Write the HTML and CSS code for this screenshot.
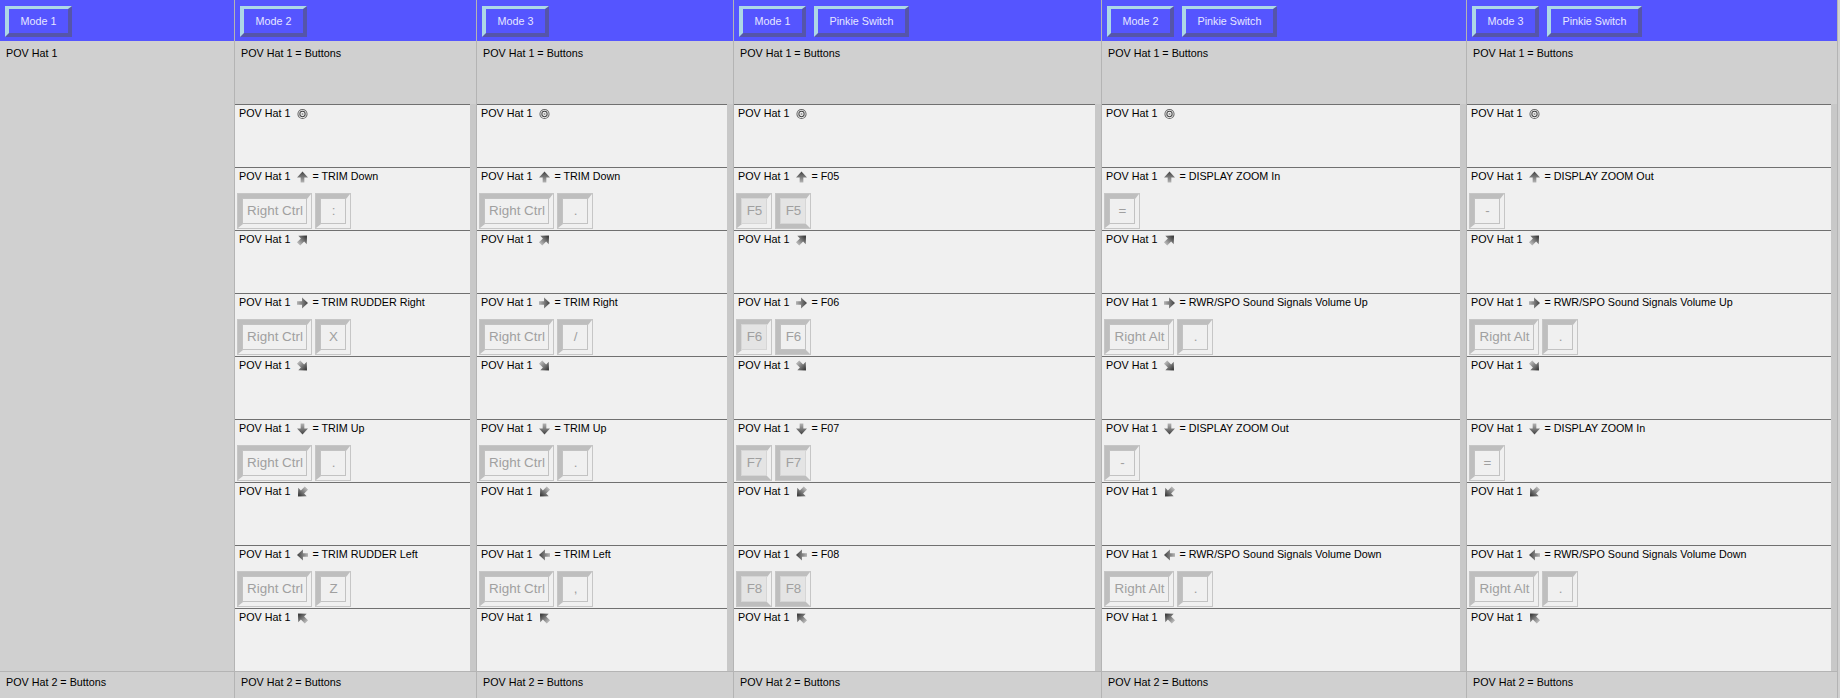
FILE: index.html
```html
<!DOCTYPE html>
<html lang="en">
<head>
<meta charset="utf-8">
<title>POV Hat bindings</title>
<link rel="stylesheet" href="styles.css">
</head>
<body>
<svg class="defs" aria-hidden="true">
  <defs>
    <linearGradient id="ag" x1="0" y1="0" x2="0" y2="1">
      <stop offset="0" stop-color="#404040"/>
      <stop offset="1" stop-color="#b4b4b4"/>
    </linearGradient>
    <linearGradient id="dg" gradientUnits="userSpaceOnUse" x1="6" y1="1" x2="6" y2="11">
      <stop offset="0" stop-color="#404040"/>
      <stop offset="1" stop-color="#b0b0b0"/>
    </linearGradient>
    <symbol id="c" viewBox="0 0 12 12"><circle cx="6" cy="6" r="5" fill="none" stroke="#666" stroke-width="1.1"/><circle cx="6" cy="6" r="2.9" fill="none" stroke="#444" stroke-width="1.1"/><circle cx="6" cy="6" r="1.1" fill="#999"/></symbol>
    <symbol id="n" viewBox="0 0 12 12"><path d="M6 0L12 6.5H8V12H4V6.5H0Z" fill="url(#ag)"/></symbol>
    <symbol id="s" viewBox="0 0 12 12"><g transform="rotate(180 6 6)"><path d="M6 0L12 6.5H8V12H4V6.5H0Z" fill="url(#ag)"/></g></symbol>
    <symbol id="e" viewBox="0 0 12 12"><g transform="rotate(90 6 6)"><path d="M6 0L12 6.5H8V12H4V6.5H0Z" fill="url(#ag)"/></g></symbol>
    <symbol id="w" viewBox="0 0 12 12"><g transform="rotate(270 6 6)"><path d="M6 0L12 6.5H8V12H4V6.5H0Z" fill="url(#ag)"/></g></symbol>
    <symbol id="ne" viewBox="0 0 12 12"><g transform="rotate(45 6 6)"><path d="M6 -1L12.5 6H8.5V12H3.5V6H-.5Z" fill="url(#dg)"/></g></symbol>
    <symbol id="se" viewBox="0 0 12 12"><g transform="rotate(135 6 6)"><path d="M6 -1L12.5 6H8.5V12H3.5V6H-.5Z" fill="url(#dg)"/></g></symbol>
    <symbol id="sw" viewBox="0 0 12 12"><g transform="rotate(225 6 6)"><path d="M6 -1L12.5 6H8.5V12H3.5V6H-.5Z" fill="url(#dg)"/></g></symbol>
    <symbol id="nw" viewBox="0 0 12 12"><g transform="rotate(315 6 6)"><path d="M6 -1L12.5 6H8.5V12H3.5V6H-.5Z" fill="url(#dg)"/></g></symbol>
  </defs>
</svg>

<main class="board">
  <section class="col col-1">
    <header class="head"><button class="mode m-mode">Mode 1</button></header>
    <div class="first-body"><p class="summary">POV Hat 1</p></div>
    <div class="foot"><p class="summary">POV Hat 2 = Buttons</p></div>
  </section>

  <section class="col col-2">
    <header class="head"><button class="mode m-mode">Mode 2</button></header>
    <div class="top"><p class="summary">POV Hat 1 = Buttons</p></div>
    <div class="rows">
      <div class="row"><div class="lab">POV Hat 1<svg class="ic"><use href="#c"/></svg></div></div>
      <div class="row"><div class="lab">POV Hat 1<svg class="ic"><use href="#n"/></svg><span>= TRIM Down</span></div>
        <div class="keys"><span class="key k-wide"><span class="face">Right Ctrl</span></span><span class="key"><span class="face">:</span></span></div></div>
      <div class="row"><div class="lab">POV Hat 1<svg class="ic"><use href="#ne"/></svg></div></div>
      <div class="row"><div class="lab">POV Hat 1<svg class="ic"><use href="#e"/></svg><span>= TRIM RUDDER Right</span></div>
        <div class="keys"><span class="key k-wide"><span class="face">Right Ctrl</span></span><span class="key"><span class="face">X</span></span></div></div>
      <div class="row"><div class="lab">POV Hat 1<svg class="ic"><use href="#se"/></svg></div></div>
      <div class="row"><div class="lab">POV Hat 1<svg class="ic"><use href="#s"/></svg><span>= TRIM Up</span></div>
        <div class="keys"><span class="key k-wide"><span class="face">Right Ctrl</span></span><span class="key"><span class="face">.</span></span></div></div>
      <div class="row"><div class="lab">POV Hat 1<svg class="ic"><use href="#sw"/></svg></div></div>
      <div class="row"><div class="lab">POV Hat 1<svg class="ic"><use href="#w"/></svg><span>= TRIM RUDDER Left</span></div>
        <div class="keys"><span class="key k-wide"><span class="face">Right Ctrl</span></span><span class="key"><span class="face">Z</span></span></div></div>
      <div class="row"><div class="lab">POV Hat 1<svg class="ic"><use href="#nw"/></svg></div></div>
    </div>
    <div class="foot"><p class="summary">POV Hat 2 = Buttons</p></div>
  </section>

  <section class="col col-3">
    <header class="head"><button class="mode m-mode">Mode 3</button></header>
    <div class="top"><p class="summary">POV Hat 1 = Buttons</p></div>
    <div class="rows">
      <div class="row"><div class="lab">POV Hat 1<svg class="ic"><use href="#c"/></svg></div></div>
      <div class="row"><div class="lab">POV Hat 1<svg class="ic"><use href="#n"/></svg><span>= TRIM Down</span></div>
        <div class="keys"><span class="key k-wide"><span class="face">Right Ctrl</span></span><span class="key"><span class="face">.</span></span></div></div>
      <div class="row"><div class="lab">POV Hat 1<svg class="ic"><use href="#ne"/></svg></div></div>
      <div class="row"><div class="lab">POV Hat 1<svg class="ic"><use href="#e"/></svg><span>= TRIM Right</span></div>
        <div class="keys"><span class="key k-wide"><span class="face">Right Ctrl</span></span><span class="key"><span class="face">/</span></span></div></div>
      <div class="row"><div class="lab">POV Hat 1<svg class="ic"><use href="#se"/></svg></div></div>
      <div class="row"><div class="lab">POV Hat 1<svg class="ic"><use href="#s"/></svg><span>= TRIM Up</span></div>
        <div class="keys"><span class="key k-wide"><span class="face">Right Ctrl</span></span><span class="key"><span class="face">.</span></span></div></div>
      <div class="row"><div class="lab">POV Hat 1<svg class="ic"><use href="#sw"/></svg></div></div>
      <div class="row"><div class="lab">POV Hat 1<svg class="ic"><use href="#w"/></svg><span>= TRIM Left</span></div>
        <div class="keys"><span class="key k-wide"><span class="face">Right Ctrl</span></span><span class="key"><span class="face">,</span></span></div></div>
      <div class="row"><div class="lab">POV Hat 1<svg class="ic"><use href="#nw"/></svg></div></div>
    </div>
    <div class="foot"><p class="summary">POV Hat 2 = Buttons</p></div>
  </section>

  <section class="col col-4">
    <header class="head"><button class="mode m-mode">Mode 1</button><button class="mode m-pinkie">Pinkie Switch</button></header>
    <div class="top"><p class="summary">POV Hat 1 = Buttons</p></div>
    <div class="rows">
      <div class="row"><div class="lab">POV Hat 1<svg class="ic"><use href="#c"/></svg></div></div>
      <div class="row"><div class="lab">POV Hat 1<svg class="ic"><use href="#n"/></svg><span>= F05</span></div>
        <div class="keys"><span class="key"><span class="face f-dim">F5</span></span><span class="key"><span class="face f-dim f-low">F5</span></span></div></div>
      <div class="row"><div class="lab">POV Hat 1<svg class="ic"><use href="#ne"/></svg></div></div>
      <div class="row"><div class="lab">POV Hat 1<svg class="ic"><use href="#e"/></svg><span>= F06</span></div>
        <div class="keys"><span class="key"><span class="face f-dim">F6</span></span><span class="key"><span class="face f-low">F6</span></span></div></div>
      <div class="row"><div class="lab">POV Hat 1<svg class="ic"><use href="#se"/></svg></div></div>
      <div class="row"><div class="lab">POV Hat 1<svg class="ic"><use href="#s"/></svg><span>= F07</span></div>
        <div class="keys"><span class="key"><span class="face f-dim f-low">F7</span></span><span class="key"><span class="face f-dim f-low">F7</span></span></div></div>
      <div class="row"><div class="lab">POV Hat 1<svg class="ic"><use href="#sw"/></svg></div></div>
      <div class="row"><div class="lab">POV Hat 1<svg class="ic"><use href="#w"/></svg><span>= F08</span></div>
        <div class="keys"><span class="key"><span class="face f-dim f-low">F8</span></span><span class="key"><span class="face f-dim f-low">F8</span></span></div></div>
      <div class="row"><div class="lab">POV Hat 1<svg class="ic"><use href="#nw"/></svg></div></div>
    </div>
    <div class="foot"><p class="summary">POV Hat 2 = Buttons</p></div>
  </section>

  <section class="col col-5">
    <header class="head"><button class="mode m-mode">Mode 2</button><button class="mode m-pinkie">Pinkie Switch</button></header>
    <div class="top"><p class="summary">POV Hat 1 = Buttons</p></div>
    <div class="rows">
      <div class="row"><div class="lab">POV Hat 1<svg class="ic"><use href="#c"/></svg></div></div>
      <div class="row"><div class="lab">POV Hat 1<svg class="ic"><use href="#n"/></svg><span>= DISPLAY ZOOM In</span></div>
        <div class="keys"><span class="key"><span class="face">=</span></span></div></div>
      <div class="row"><div class="lab">POV Hat 1<svg class="ic"><use href="#ne"/></svg></div></div>
      <div class="row"><div class="lab">POV Hat 1<svg class="ic"><use href="#e"/></svg><span>= RWR/SPO Sound Signals Volume Up</span></div>
        <div class="keys"><span class="key k-alt"><span class="face">Right Alt</span></span><span class="key"><span class="face">.</span></span></div></div>
      <div class="row"><div class="lab">POV Hat 1<svg class="ic"><use href="#se"/></svg></div></div>
      <div class="row"><div class="lab">POV Hat 1<svg class="ic"><use href="#s"/></svg><span>= DISPLAY ZOOM Out</span></div>
        <div class="keys"><span class="key"><span class="face">-</span></span></div></div>
      <div class="row"><div class="lab">POV Hat 1<svg class="ic"><use href="#sw"/></svg></div></div>
      <div class="row"><div class="lab">POV Hat 1<svg class="ic"><use href="#w"/></svg><span>= RWR/SPO Sound Signals Volume Down</span></div>
        <div class="keys"><span class="key k-alt"><span class="face">Right Alt</span></span><span class="key"><span class="face">.</span></span></div></div>
      <div class="row"><div class="lab">POV Hat 1<svg class="ic"><use href="#nw"/></svg></div></div>
    </div>
    <div class="foot"><p class="summary">POV Hat 2 = Buttons</p></div>
  </section>

  <section class="col col-6">
    <header class="head"><button class="mode m-mode">Mode 3</button><button class="mode m-pinkie">Pinkie Switch</button></header>
    <div class="top"><p class="summary">POV Hat 1 = Buttons</p></div>
    <div class="rows">
      <div class="row"><div class="lab">POV Hat 1<svg class="ic"><use href="#c"/></svg></div></div>
      <div class="row"><div class="lab">POV Hat 1<svg class="ic"><use href="#n"/></svg><span>= DISPLAY ZOOM Out</span></div>
        <div class="keys"><span class="key"><span class="face">-</span></span></div></div>
      <div class="row"><div class="lab">POV Hat 1<svg class="ic"><use href="#ne"/></svg></div></div>
      <div class="row"><div class="lab">POV Hat 1<svg class="ic"><use href="#e"/></svg><span>= RWR/SPO Sound Signals Volume Up</span></div>
        <div class="keys"><span class="key k-alt"><span class="face">Right Alt</span></span><span class="key"><span class="face">.</span></span></div></div>
      <div class="row"><div class="lab">POV Hat 1<svg class="ic"><use href="#se"/></svg></div></div>
      <div class="row"><div class="lab">POV Hat 1<svg class="ic"><use href="#s"/></svg><span>= DISPLAY ZOOM In</span></div>
        <div class="keys"><span class="key"><span class="face">=</span></span></div></div>
      <div class="row"><div class="lab">POV Hat 1<svg class="ic"><use href="#sw"/></svg></div></div>
      <div class="row"><div class="lab">POV Hat 1<svg class="ic"><use href="#w"/></svg><span>= RWR/SPO Sound Signals Volume Down</span></div>
        <div class="keys"><span class="key k-alt"><span class="face">Right Alt</span></span><span class="key"><span class="face">.</span></span></div></div>
      <div class="row"><div class="lab">POV Hat 1<svg class="ic"><use href="#nw"/></svg></div></div>
    </div>
    <div class="foot"><p class="summary">POV Hat 2 = Buttons</p></div>
  </section>
</main>
</body>
</html>
```

FILE: styles.css
```css
* { box-sizing: border-box; }
html, body { margin: 0; padding: 0; }
body {
  width: 1840px;
  height: 698px;
  overflow: hidden;
  background: #d0d0d0;
  font-family: "Liberation Sans", Arial, sans-serif;
  font-size: 10.75px;
  color: #000;
}
.defs { display: block; width: 0; height: 0; overflow: hidden; }

.board {
  display: grid;
  grid-template-columns: 235px 242px 257px 368px 365px 371px;
  height: 698px;
}
.col {
  display: flex;
  flex-direction: column;
  height: 698px;
  background: #d0d0d0;
  border-right: 1px solid #b4b4b4;
}
.head {
  display: flex;
  gap: 8px;
  flex: 0 0 41px;
  padding: 6px 0 0 5px;
  background: #5555ff;
}
.mode {
  height: 31px;
  padding: 0;
  border-style: solid;
  border-width: 3px 4px 4px 4px;
  border-color: #add8e6 #5555aa #5555aa #add8e6;
  background: #5555ff;
  color: #e6e6ff;
  font: inherit;
}
.m-mode { width: 67px; }
.m-pinkie { width: 95px; }

.summary { margin: 0; padding: 6px 0 0 6px; line-height: 13px; }
.first-body { flex: 0 0 630px; }
.top { flex: 0 0 63px; }
.foot { flex: 1; border-top: 1px solid #b4b4b4; }
.foot .summary { padding-top: 4px; }
.rows {
  display: flex;
  flex-direction: column;
  flex: 0 0 567px;
  background: #c8c8c8;
  padding-right: 6px;
}
.row {
  flex: 0 0 63px;
  background: #f0f0f0;
  border-top: 1px solid #707070;
  padding-left: 2px;
}
.lab {
  display: flex;
  align-items: center;
  height: 13px;
  margin-top: 1px;
  padding-left: 2px;
  white-space: nowrap;
}
.ic { width: 11px; height: 12px; margin: 2px 4px 0 7px; flex: none; }
.keys { display: flex; gap: 3px; margin-top: 11px; }
.key {
  display: block;
  width: 36px;
  height: 36px;
  border: 1px solid #c6c6c6;
}
.key.k-wide { width: 75px; }
.key.k-alt { width: 70px; }
.face {
  display: flex;
  align-items: center;
  justify-content: center;
  height: 34px;
  padding-bottom: 1px;
  border-style: solid;
  border-width: 5px 4px 4px 5px;
  border-color: #bebebe #f0f0f0 #f0f0f0 #bebebe;
  outline: 1px solid #c2c2c2;
  outline-offset: -5px;
  background: #f0f0f0;
  color: #a0a0a0;
  font-size: 13.4px;
  line-height: 1;
}
.face.f-dim { background: #e4e4e4; outline-color: #d6d6d6; }
.face.f-low { border-bottom-color: #bebebe; }
```
